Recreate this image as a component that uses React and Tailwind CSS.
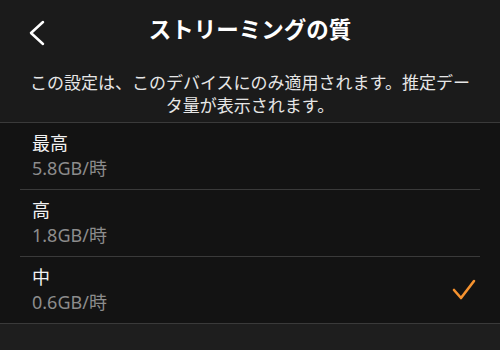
export default function App() {
  const rows = [
    { name: "最高", rate: "5.8GB/時", checked: false },
    { name: "高", rate: "1.8GB/時", checked: false },
    { name: "中", rate: "0.6GB/時", checked: true },
  ];
  return (
    <div
      className="w-[500px] h-[350px] overflow-hidden bg-[#1e1e1e] text-white flex flex-col"
      style={{ fontFamily: '"Noto Sans", "Noto Sans CJK JP", sans-serif' }}
    >
      <div className="bg-[#1b1b1b]">
        <div className="relative h-[60px] flex items-center justify-center">
          <svg className="absolute left-[28px] top-[20px]" width="18" height="26" viewBox="0 0 18 26">
            <polyline points="15,2 3,13 15,24" fill="none" stroke="#ffffff" strokeWidth="2.5" strokeLinecap="round" strokeLinejoin="round" />
          </svg>
          <div className="text-[22.5px] font-bold leading-none">ストリーミングの質</div>
        </div>
        <div className="pt-[11px] pb-[5px] px-[26px] text-center text-[17px] leading-[23px] text-[#e6e6e6]">
          この設定は、このデバイスにのみ適用されます。推定データ量が表示されます。
        </div>
      </div>
      <div className="bg-[#131313] border-t border-b border-[#3a3a3a]">
        {rows.map((r, i) => (
          <div
            key={r.name}
            className={
              i < rows.length - 1
                ? "mx-5 h-[67px] border-b border-[#3a3a3a] flex items-center justify-between pl-3 pr-1"
                : "mx-5 h-[66px] flex items-center justify-between pl-3 pr-1"
            }
          >
            <div className="flex flex-col">
              <div className="text-[18px] leading-[25px] text-[#f2f2f2]">{r.name}</div>
              <div className="text-[18px] leading-[25px] text-[#8c8c8c]">{r.rate}</div>
            </div>
            {r.checked && (
              <svg width="24" height="22" viewBox="0 0 24 22">
                <polyline points="2,11 9,19 22,2" fill="none" stroke="#f5922f" strokeWidth="2.6" strokeLinecap="round" strokeLinejoin="round" />
              </svg>
            )}
          </div>
        ))}
      </div>
      <div className="flex-1 bg-[#1e1e1e]" />
    </div>
  );
}
